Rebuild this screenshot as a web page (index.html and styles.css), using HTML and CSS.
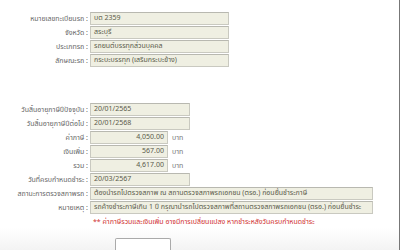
FILE: index.html
```html
<!DOCTYPE html>
<html lang="th">
<head>
<meta charset="utf-8">
<link rel="stylesheet" href="styles.css">
</head>
<body>
<div class="page">
  <div class="group group-top">
    <div class="row"><span class="label">หมายเลขทะเบียนรถ :</span><span class="field w-mid">บต 2359</span></div>
    <div class="row"><span class="label">จังหวัด :</span><span class="field w-mid">สระบุรี</span></div>
    <div class="row"><span class="label">ประเภทรถ :</span><span class="field w-mid">รถยนต์บรรทุกส่วนบุคคล</span></div>
    <div class="row"><span class="label">ลักษณะรถ :</span><span class="field w-mid">กระบะบรรทุก (เสริมกระบะข้าง)</span></div>
  </div>
  <div class="group group-bottom">
    <div class="row"><span class="label">วันสิ้นอายุภาษีปีปัจจุบัน :</span><span class="field w-date">20/01/2565</span></div>
    <div class="row"><span class="label">วันสิ้นอายุภาษีปีต่อไป :</span><span class="field w-date">20/01/2568</span></div>
    <div class="row"><span class="label">ค่าภาษี :</span><span class="field w-num">4,050.00</span><span class="unit">บาท</span></div>
    <div class="row"><span class="label">เงินเพิ่ม :</span><span class="field w-num">567.00</span><span class="unit">บาท</span></div>
    <div class="row"><span class="label">รวม :</span><span class="field w-num">4,617.00</span><span class="unit">บาท</span></div>
    <div class="row"><span class="label">วันที่ครบกำหนดชำระ :</span><span class="field w-date">20/03/2567</span></div>
    <div class="row"><span class="label">สถานะการตรวจสภาพรถ :</span><span class="field w-long">ต้องนำรถไปตรวจสภาพ ณ สถานตรวจสภาพรถเอกชน (ตรอ.) ก่อนยื่นชำระภาษี</span></div>
    <div class="row"><span class="label">หมายเหตุ :</span><span class="field w-long">รถค้างชำระภาษีเกิน 1 ปี กรุณานำรถไปตรวจสภาพที่สถานตรวจสภาพรถเอกชน (ตรอ.) ก่อนยื่นชำระ</span></div>
    <div class="note">** ค่าภาษีรวมและเงินเพิ่ม อาจมีการเปลี่ยนแปลง หากชำระหลังวันครบกำหนดชำระ</div>
  </div>
  <div class="footer">
    <button class="btn" type="button" aria-label="ชำระภาษี"></button>
  </div>
</div>
</body>
</html>
```

FILE: styles.css
```css
html, body {
  margin: 0;
  padding: 0;
  background: #ffffff;
}
body {
  font-family: "Noto Sans Thai", Tahoma, "DejaVu Sans", sans-serif;
  font-size: 7px;
  color: #555;
}
.page {
  width: 399px;
  height: 250px;
  border-right: 1px solid #777;
  display: flex;
  flex-direction: column;
  overflow: hidden;
}
.group {
  display: flex;
  flex-direction: column;
  gap: 1px;
}
.group-top {
  padding-top: 12px;
}
.group-bottom {
  padding-top: 36px;
}
.row {
  display: flex;
  align-items: center;
  height: 13px;
}
.label {
  width: 88px;
  text-align: right;
  padding-right: 2px;
  color: #666;
  white-space: nowrap;
  flex: none;
}
.field {
  box-sizing: border-box;
  height: 13px;
  line-height: 11px;
  border: 1px solid #c9c9c0;
  border-top-color: #b8b8b0;
  background: #efefe2;
  padding: 0 3px;
  color: #5a5a4a;
  white-space: nowrap;
  overflow: hidden;
  flex: none;
}
.w-mid { width: 139px; }
.w-date { width: 100px; }
.w-num { width: 78px; text-align: right; }
.w-long { width: 283px; }
.unit {
  margin-left: 4px;
  color: #777;
}
.note {
  padding-left: 93px;
  margin-top: 2px;
  color: #d03030;
  white-space: nowrap;
}
.footer {
  margin-top: auto;
  height: 22px;
  background: linear-gradient(#ffffff, #f3f3f3);
  display: flex;
  align-items: flex-end;
  padding-left: 115px;
}
.btn {
  width: 56px;
  height: 12px;
  border: 1px solid #aaa;
  border-bottom: none;
  border-radius: 2px 2px 0 0;
  background: #fff;
  font: inherit;
  color: #555;
  padding: 0;
  margin: 0;
}
```
